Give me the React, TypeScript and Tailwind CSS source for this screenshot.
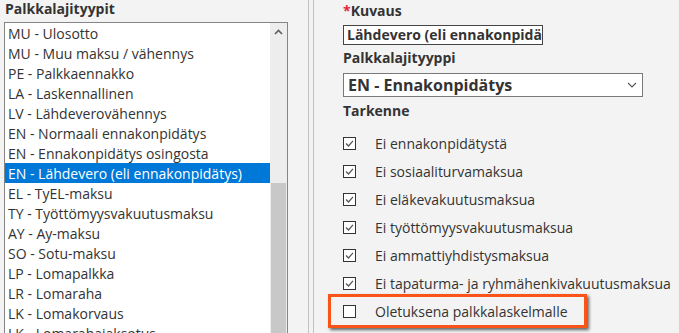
import React from "react";

const items = [
  "MU - Ulosotto",
  "MU - Muu maksu / vähennys",
  "PE - Palkkaennakko",
  "LA - Laskennallinen",
  "LV - Lähdeverovähennys",
  "EN - Normaali ennakonpidätys",
  "EN - Ennakonpidätys osingosta",
  "EN - Lähdevero (eli ennakonpidätys)",
  "EL - TyEL-maksu",
  "TY - Työttömyysvakuutusmaksu",
  "AY - Ay-maksu",
  "SO - Sotu-maksu",
  "LP - Lomapalkka",
  "LR - Lomaraha",
  "LK - Lomakorvaus",
  "LK - Lomarahajaksotus",
];

const checks = [
  "Ei ennakonpidätystä",
  "Ei sosiaaliturvamaksua",
  "Ei eläkevakuutusmaksua",
  "Ei työttömyysvakuutusmaksua",
  "Ei ammattiyhdistysmaksua",
  "Ei tapaturma- ja ryhmähenkivakuutusmaksua",
];

function Box({ checked }: { checked: boolean }) {
  return (
    <div className="w-[13px] h-[13px] border border-[#333] bg-white flex items-center justify-center shrink-0">
      {checked && (
        <svg width="11" height="11" viewBox="0 0 11 11">
          <path d="M2 5.5 L4.5 8 L9 2.8" fill="none" stroke="#555" strokeWidth="1.2" />
        </svg>
      )}
    </div>
  );
}

export default function App() {
  return (
    <div
      className="w-[679px] h-[333px] bg-[#f3f3f3] overflow-hidden flex text-[#333] text-[14px]"
      style={{ fontFamily: '"Open Sans", "Noto Sans", sans-serif' }}
    >
      {/* Left column */}
      <div className="ml-[4px] w-[284px] flex flex-col shrink-0">
        <div className="h-[18px] leading-[18px] font-bold pl-[1px]">Palkkalajityypit</div>
        <div className="mt-[4px] h-[340px] border border-[#858585] bg-white flex shrink-0">
          <div className="w-[265px] flex flex-col">
            {items.map((t, i) => (
              <div
                key={i}
                className={
                  "h-[20px] shrink-0 pt-[1px] leading-[19px] pl-[3px] whitespace-nowrap overflow-hidden " +
                  (i === 7 ? "bg-[#0078d7] text-white" : "")
                }
              >
                {t}
              </div>
            ))}
          </div>
          <div className="w-[17px] bg-[#ededed] flex flex-col">
            <div className="h-[17px] flex items-center justify-center shrink-0">
              <svg width="9" height="6" viewBox="0 0 9 6">
                <path d="M1 5 L4.5 1.5 L8 5" fill="none" stroke="#5f5f5f" strokeWidth="1.6" />
              </svg>
            </div>
            <div className="h-[143px] shrink-0" />
            <div className="flex-1 mx-[1px] bg-[#c8c8c8]" />
          </div>
        </div>
      </div>

      {/* Dividers */}
      <div className="ml-[20px] w-px h-full bg-[#c2c2c2] shrink-0" />
      <div className="ml-[4px] w-px h-full bg-[#c2c2c2] shrink-0" />

      {/* Right column */}
      <div className="pl-[29px] flex flex-col">
        <div className="pt-[1px] h-[21px] leading-[20px] font-bold">
          <span className="text-[#e0263b]">*</span>Kuvaus
        </div>
        <div className="mt-[4px] w-[200px] h-[20px] border border-[#444] bg-white overflow-hidden whitespace-nowrap font-bold leading-[18px] pl-[3px]">
          Lähdevero (eli ennakonpidätys)
        </div>
        <div className="mt-[3px] h-[20px] leading-[20px] font-bold">Palkkalajityyppi</div>
        <div className="mt-[5px] w-[300px] h-[24px] border border-[#7a7a7a] bg-white flex items-center justify-between pl-[4px] pr-[5px]">
          <span className="font-bold text-[16px] leading-[22px] whitespace-nowrap">EN - Ennakonpidätys</span>
          <svg width="10" height="6" viewBox="0 0 10 6">
            <path d="M1 1 L5 5 L9 1" fill="none" stroke="#555" strokeWidth="1.1" />
          </svg>
        </div>
        <div className="mt-[4px] h-[20px] leading-[20px] font-bold">Tarkenne</div>
        <div className="mt-[8px] flex flex-col">
          {checks.map((c, i) => (
            <div key={i} className="h-[28px] flex items-center">
              <Box checked />
              <span className="ml-[19px] whitespace-nowrap">{c}</span>
            </div>
          ))}
          <div className="-mt-[3px] -ml-[15px] w-[259px] h-[34px] border-[3px] border-[#fb5418] pl-[12px] flex items-center shadow-[2px_2px_3px_rgba(0,0,0,0.6)]">
            <Box checked={false} />
            <span className="ml-[19px] whitespace-nowrap">Oletuksena palkkalaskelmalle</span>
          </div>
        </div>
      </div>
    </div>
  );
}
